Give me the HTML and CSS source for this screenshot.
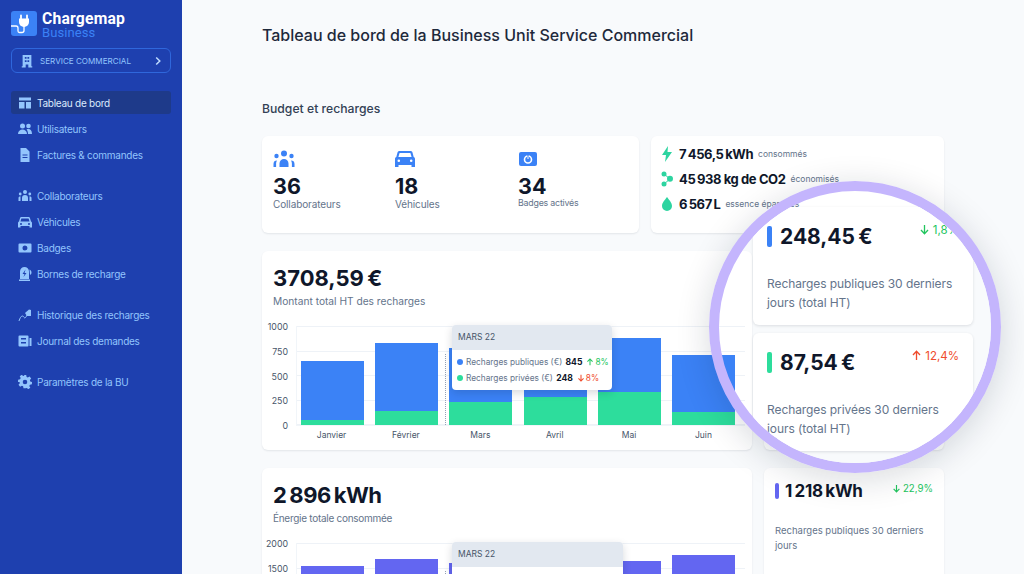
FILE: index.html
```html
<!DOCTYPE html>
<html lang="fr">
<head>
<meta charset="utf-8">
<title>Chargemap Business</title>
<link rel="stylesheet" href="styles.css">
</head>
<body>
<div class="app">
  <aside class="sidebar">
    <div class="logo">
      <div class="logo-mark">
        <svg viewBox="0 0 26 24" width="26" height="24"><path d="M10 4.500v3M16 4.500v3" stroke="#fff" stroke-width="1.800" stroke-linecap="round"/><path d="M8 7.500h10v3.500a5 5 0 0 1-10 0z" fill="#fff"/><path d="M13 15v4.500a2 2 0 0 1-2 2H8.500a1.500 1.500 0 0 1-1.500-1.500v-3a2 2 0 0 0-2-2H0" fill="none" stroke="#fff" stroke-width="1.300"/></svg>
      </div>
      <div class="logo-text"><span class="logo-name">Chargemap</span><span class="logo-sub">Business</span></div>
    </div>
    <button class="unit">
      <svg class="unit-icon" viewBox="0 0 16 16" width="14" height="14"><path fill-rule="evenodd" d="M3 1h10v13h1v1.500H9.500V12h-3v3.500H2V14h1zM5.500 3.500v2h2v-2zm3 0v2h2v-2zm-3 3.500v2h2V7zm3 0v2h2V7z" fill="#93c5fd"/></svg>
      <span class="unit-label">SERVICE COMMERCIAL</span>
      <svg viewBox="0 0 10 10" width="10" height="10"><path d="M3.200 1.500 6.800 5 3.200 8.500" fill="none" stroke="#bfdbfe" stroke-width="1.500"/></svg>
    </button>
    <nav class="nav">
      <div class="nav-group">
        <a class="nav-item active"><svg viewBox="0 0 14 14" width="14" height="14"><path d="M1 1.500h12v3H1zM1 6h5.500v6.500H1zM8 6h5v6.500H8z" fill="#93c5fd"/></svg>Tableau de bord</a>
        <a class="nav-item"><svg viewBox="0 0 14 14" width="14" height="14"><circle cx="4.500" cy="4" r="2.500" fill="#93c5fd"/><circle cx="10.500" cy="4" r="2.300" fill="#93c5fd"/><path d="M0 12c0-6 9-6 9 0zM10 12c0-2-.5-3.500-1.500-4.500 3-1.200 5.500.5 5.500 4.500z" fill="#93c5fd"/></svg>Utilisateurs</a>
        <a class="nav-item"><svg viewBox="0 0 14 14" width="14" height="14"><path fill-rule="evenodd" d="M2.500 0H8l3.500 3.500V14h-9zM4.500 6.500v1h5v-1zm0 2.500v1h5V9z" fill="#93c5fd"/></svg>Factures &amp; commandes</a>
      </div>
      <div class="nav-group">
        <a class="nav-item"><svg viewBox="0 0 14 14" width="14" height="14" fill="#93c5fd"><circle cx="7" cy="3" r="2"/><circle cx="2.200" cy="5" r="1.400"/><circle cx="11.800" cy="5" r="1.400"/><path d="M4 12V9a3 3 0 0 1 6 0v3zM.5 12V9c0-1 .8-1.700 2-1.700V12zM13.500 12V9c0-1-.8-1.700-2-1.700V12z"/></svg>Collaborateurs</a>
        <a class="nav-item"><svg viewBox="0 0 14 14" width="14" height="14"><path fill-rule="evenodd" d="M3.500 2h7c.8 0 1.200.4 1.500 1.200L13 6.500c.6.300 1 .8 1 1.500v4.500h-2.500V11h-9v1.500H0V8c0-.7.4-1.200 1-1.500l1-3.300C2.300 2.400 2.700 2 3.500 2zM3.400 3.500l-.9 3h9l-.9-3zM3 8a1 1 0 1 0 0 2 1 1 0 0 0 0-2zm8 0a1 1 0 1 0 0 2 1 1 0 0 0 0-2z" fill="#93c5fd"/></svg>Véhicules</a>
        <a class="nav-item"><svg viewBox="0 0 14 14" width="14" height="14"><path fill-rule="evenodd" d="M1.500 2.500h11a1 1 0 0 1 1 1v7a1 1 0 0 1-1 1h-11a1 1 0 0 1-1-1v-7a1 1 0 0 1 1-1zM7 4.500a2.500 2.500 0 1 0 0 5 2.500 2.500 0 0 0 0-5z" fill="#93c5fd"/></svg>Badges</a>
        <a class="nav-item"><svg viewBox="0 0 14 14" width="14" height="14"><path fill-rule="evenodd" d="M6.500 0a4.500 4.500 0 0 1 4.500 4.500V12H2V4.500A4.500 4.500 0 0 1 6.500 0zM7.500 2.500 4.500 7h2L5.500 10l3-4h-2z" fill="#93c5fd"/><path d="M1 12.500h11V14H1zM11.500 2.500c1.200.5 2 1.500 2 3s-.8 2-1.500 2.500z" fill="#93c5fd"/></svg>Bornes de recharge</a>
      </div>
      <div class="nav-group">
        <a class="nav-item"><svg viewBox="0 0 14 14" width="14" height="14"><path d="M7 5l4-3.500 2 .5v6H9z" fill="#93c5fd"/><path d="M1 13c1-3 2-5 3.500-5S6 11 7.500 9.500 8 8 9 7" fill="none" stroke="#93c5fd" stroke-width="1"/></svg>Historique des recharges</a>
        <a class="nav-item"><svg viewBox="0 0 14 14" width="14" height="14"><path fill-rule="evenodd" d="M1.500 1.500h8a1 1 0 0 1 1 1v9a1 1 0 0 1-1 1h-8a1 1 0 0 1-1-1v-9a1 1 0 0 1 1-1zM3 4v1.500h5V4zm0 4v1.500h5V8z" fill="#93c5fd"/><path d="M11.500 4H13.500V12H11.500z" fill="#93c5fd"/></svg>Journal des demandes</a>
      </div>
      <div class="nav-group">
        <a class="nav-item"><svg viewBox="0 0 14 14" width="14" height="14"><path fill-rule="evenodd" d="M5.800 0h2.400l.4 2 1.200.6 1.800-1 1.600 2-1.300 1.500.3 1.300L14 7l-.1 2.300-2 .4-.6 1.200 1 1.800-2 1.500-1.500-1.300-1.300.3H5.500l-.4-1.900-1.200-.6-1.800 1-1.600-2 1.300-1.500-.3-1.300L0 7l.1-2.300 2-.4.6-1.200-1-1.800 2-1.500 1.500 1.300 1.300-.3zM7 4.700a2.300 2.300 0 1 0 0 4.600 2.300 2.300 0 0 0 0-4.600z" fill="#93c5fd"/></svg>Paramètres de la BU</a>
      </div>
    </nav>
  </aside>

  <main class="main">
    <h1 class="page-title">Tableau de bord de la Business Unit Service Commercial</h1>
    <h2 class="section-title">Budget et recharges</h2>

    <section class="top-row">
      <div class="card counts">
        <div class="count">
          <svg class="count-icon" viewBox="0 0 22 18" width="22" height="18" fill="#3b82f6"><circle cx="11" cy="3.500" r="3"/><circle cx="3.500" cy="6" r="2.200"/><circle cx="18.500" cy="6" r="2.200"/><path d="M6.500 17v-3.500a4.500 4.500 0 0 1 9 0V17zM.5 17v-3c0-2.500 1.300-3.500 3.500-3.500-.6 1-.9 2-.9 3.200V17zM21.500 17v-3c0-2.500-1.300-3.500-3.500-3.500.6 1 .9 2 .9 3.200V17z"/></svg>
          <div class="count-value">36</div>
          <div class="count-label">Collaborateurs</div>
        </div>
        <div class="count">
          <svg class="count-icon" viewBox="0 0 20 18" width="20" height="18"><path fill-rule="evenodd" d="M4.500 1h11c1 0 1.600.5 2 1.500l1.200 4.500c.8.400 1.300 1 1.300 2v8h-3.500v-2h-13v2H0V9c0-1 .5-1.600 1.300-2l1.200-4.500C2.900 1.500 3.500 1 4.500 1zM4.600 3 3.400 7h13.200l-1.200-4zM3.800 9.500a1.300 1.300 0 1 0 0 2.600 1.300 1.300 0 0 0 0-2.600zm12.400 0a1.300 1.300 0 1 0 0 2.600 1.300 1.300 0 0 0 0-2.600z" fill="#3b82f6"/></svg>
          <div class="count-value">18</div>
          <div class="count-label">Véhicules</div>
        </div>
        <div class="count">
          <svg class="count-icon" viewBox="0 0 20 18" width="20" height="18"><rect x="1" y="2" width="18" height="14" rx="2" fill="#3b82f6"/><circle cx="10" cy="9.500" r="3.500" fill="none" stroke="#fff" stroke-width="1.600"/><path d="M10 5v4" stroke="#3b82f6" stroke-width="2"/><path d="M10 5.500v3.500" stroke="#fff" stroke-width="1"/></svg>
          <div class="count-value">34</div>
          <div class="count-label small">Badges activés</div>
        </div>
      </div>
      <div class="card totals">
        <div class="total">
          <svg viewBox="0 0 12 16" width="12" height="16"><path d="M7 0 1 9h4l-1 7 7-10H6.500z" fill="#2dd4a0"/></svg>
          <strong>7&#8239;456,5&#8239;kWh</strong><span>consommés</span>
        </div>
        <div class="total">
          <svg viewBox="0 0 12 16" width="12" height="16" fill="#2dd4a0"><circle cx="3" cy="3" r="2.500"/><circle cx="9" cy="7.800" r="3"/><circle cx="3" cy="13" r="2.500"/><path d="M3 3l6 5-6 5" stroke="#2dd4a0" fill="none"/></svg>
          <strong>45&#8239;938 kg de CO2</strong><span>économisés</span>
        </div>
        <div class="total">
          <svg viewBox="0 0 12 16" width="12" height="16"><path d="M6 1c2 3 5 5.500 5 9a5 5 0 0 1-10 0c0-3.500 3-6 5-9z" fill="#2dd4a0"/></svg>
          <strong>6&#8239;567&#8239;L</strong><span>essence épargnés</span>
        </div>
      </div>
    </section>

    <section class="chart-row">
      <div class="card chart-card">
        <div class="big-value">3708,59&#8239;€</div>
        <div class="big-label">Montant total HT des recharges</div>
        <div class="chart">
          <div class="y-axis"><span>1000</span><span>750</span><span>500</span><span>250</span><span>0</span></div>
          <div class="plot">
            <div class="grid-lines"><i></i><i></i><i></i><i></i><i></i></div>
            <div class="bars">
              <div class="bar bar-blue" style="height:65%"><b class="seg-green" style="height:8%"></b></div>
              <div class="bar bar-blue" style="height:83%"><b class="seg-green" style="height:17%"></b></div>
              <div class="bar bar-blue" style="height:78%"><b class="seg-green" style="height:30%"></b></div>
              <div class="bar bar-blue" style="height:70%"><b class="seg-green" style="height:41%"></b></div>
              <div class="bar bar-blue" style="height:88%"><b class="seg-green" style="height:38%"></b></div>
              <div class="bar bar-blue" style="height:71%"><b class="seg-green" style="height:18%"></b></div>
            </div>
            <div class="cursor"></div>
            <div class="tooltip">
              <div class="tooltip-head">MARS 22</div>
              <div class="tooltip-row"><i class="dot dot-blue"></i>Recharges publiques (€) <strong>845</strong>
                <span class="up"><svg viewBox="0 0 10 10" width="8" height="8"><path d="M5 9V1.500M1.800 4.500 5 1.200l3.200 3.300" fill="none" stroke="currentColor" stroke-width="1.300"/></svg>8%</span></div>
              <div class="tooltip-row"><i class="dot dot-green"></i>Recharges privées (€) <strong>248</strong>
                <span class="down"><svg viewBox="0 0 10 10" width="8" height="8"><path d="M5 1v7.500M1.800 5.500 5 8.800l3.200-3.300" fill="none" stroke="currentColor" stroke-width="1.300"/></svg>8%</span></div>
            </div>
          </div>
          <div class="x-axis"><span>Janvier</span><span>Février</span><span>Mars</span><span>Avril</span><span>Mai</span><span>Juin</span></div>
        </div>
      </div>
      <div class="side-col">
        <div class="card side-card">
          <div class="side-top"><i class="mark mark-blue"></i><strong>248,45&#8239;€</strong><span class="up"><svg viewBox="0 0 10 10" width="9" height="9"><path d="M5 1v7.500M1.800 5.500 5 8.800l3.200-3.300" fill="none" stroke="currentColor" stroke-width="1.300"/></svg>1,8%</span></div>
          <p>Recharges publiques 30 derniers jours (total HT)</p>
        </div>
        <div class="card side-card">
          <div class="side-top"><i class="mark mark-green"></i><strong>87,54&#8239;€</strong><span class="down"><svg viewBox="0 0 10 10" width="9" height="9"><path d="M5 9V1.500M1.800 4.500 5 1.200l3.200 3.300" fill="none" stroke="currentColor" stroke-width="1.300"/></svg>12,4%</span></div>
          <p>Recharges privées 30 derniers jours (total HT)</p>
        </div>
      </div>
    </section>

    <section class="chart-row">
      <div class="card chart-card">
        <div class="big-value">2&#8201;896&#8239;kWh</div>
        <div class="big-label tight">Énergie totale consommée</div>
        <div class="chart">
          <div class="y-axis"><span>2000</span><span>1500</span><span>1000</span><span>500</span><span>0</span></div>
          <div class="plot">
            <div class="grid-lines"><i></i><i></i><i></i><i></i><i></i></div>
            <div class="bars">
              <div class="bar bar-indigo" style="height:77%"></div>
              <div class="bar bar-indigo" style="height:84%"></div>
              <div class="bar bar-indigo" style="height:80%"></div>
              <div class="bar bar-indigo" style="height:80%"></div>
              <div class="bar bar-indigo" style="height:82%"></div>
              <div class="bar bar-indigo" style="height:88%"></div>
            </div>
            <div class="cursor"></div>
            <div class="tooltip wide">
              <div class="tooltip-head">MARS 22</div>
            </div>
          </div>
        </div>
      </div>
      <div class="side-col">
        <div class="card side-card">
          <div class="side-top wide-value"><i class="mark mark-indigo"></i><strong>1&#8201;218&#8239;kWh</strong><span class="up"><svg viewBox="0 0 10 10" width="9" height="9"><path d="M5 1v7.500M1.800 5.500 5 8.800l3.200-3.300" fill="none" stroke="currentColor" stroke-width="1.300"/></svg>22,9%</span></div>
          <p>Recharges publiques 30 derniers jours</p>
        </div>
      </div>
    </section>
  </main>

  <div class="lens">
    <div class="lens-panel">
      <div class="card lens-card">
        <div class="lens-top"><i class="lens-mark mark-blue"></i><strong>248,45&#8239;€</strong><span class="up"><svg viewBox="0 0 10 10" width="11" height="11"><path d="M5 1v7.500M1.800 5.500 5 8.800l3.200-3.300" fill="none" stroke="currentColor" stroke-width="1.200"/></svg>1,8%</span></div>
        <p>Recharges publiques 30 derniers jours (total HT)</p>
      </div>
      <div class="card lens-card">
        <div class="lens-top"><i class="lens-mark mark-green"></i><strong>87,54&#8239;€</strong><span class="down"><svg viewBox="0 0 10 10" width="11" height="11"><path d="M5 9V1.500M1.800 4.500 5 1.200l3.200 3.300" fill="none" stroke="currentColor" stroke-width="1.200"/></svg>12,4%</span></div>
        <p>Recharges privées 30 derniers jours (total HT)</p>
      </div>
    </div>
  </div>
</div>
</body>
</html>
```

FILE: styles.css
```css
* { box-sizing: border-box; }
html, body { margin: 0; height: 574px; overflow: hidden; }
body { font-family: Inter, "Liberation Sans", sans-serif; color: #0f172a; background: #f8fafc; }
svg { display: block; flex: none; }
.app { display: flex; height: 574px; overflow: hidden; position: relative; }

.sidebar { width: 182px; flex: none; background: #1e40af; padding: 11px 11px 0 11px; display: flex; flex-direction: column; }
.logo { display: flex; gap: 5px; height: 26px; }
.logo-mark { width: 26px; height: 25px; border-radius: 3px; background: #3b82f6; overflow: hidden; }
.logo-text { display: flex; flex-direction: column; }
.logo-name { font: 700 15.700px/15px Roboto, sans-serif; color: #fff; letter-spacing: .2px; }
.logo-sub { font: 400 13px/13px Roboto, sans-serif; color: #3b82f6; letter-spacing: .1px; }
.unit { margin-top: 11px; width: 160px; height: 25px; border: 1px solid #2f67dc; border-radius: 6px; background: transparent; display: flex; align-items: center; padding: 0 7px 0 8px; font-family: inherit; }
.unit-icon { margin-right: 6px; }
.unit-label { flex: 1; text-align: left; font-size: 8.100px; color: #93c5fd; }
.nav { margin-top: 18px; display: flex; flex-direction: column; gap: 17.900px; }
.nav-group { display: flex; flex-direction: column; gap: 3.200px; }
.nav-item { height: 23px; display: flex; align-items: center; gap: 5px; padding-left: 7px; font-size: 10px; letter-spacing: -.26px; color: #93c5fd; border-radius: 3px; width: 160px; }
.nav-item.active { background: #1e3a8a; color: #dbeafe; }

.main { flex: 1; padding: 24px 80px 0; min-width: 0; }
.page-title { margin: 0; font-size: 16px; line-height: 22px; font-weight: 500; color: #1e293b; }
.section-title { margin: 55px 0 19px; font-size: 12.200px; line-height: 16px; font-weight: 500; color: #334155; }
.card { background: #fff; border-radius: 6px; box-shadow: 0 1px 2px rgba(15,23,42,.09); }
.top-row { display: grid; grid-template-columns: 377px 293px; gap: 12px; height: 97px; }
.counts { display: grid; grid-template-columns: repeat(3, 122px); padding: 14px 11px 0; }
.count-icon { margin-bottom: 6px; }
.count-value { font-size: 21.500px; line-height: 24px; font-weight: 700; color: #0f172a; margin-top: 1px; }
.count-label { font-size: 10px; letter-spacing: -.12px; line-height: 13px; color: #64748b; }
.count-label.small { font-size: 8.800px; letter-spacing: -.2px; margin-top: -2px; }
.count:last-child { padding-left: 1px; }
.totals { display: flex; flex-direction: column; gap: 7px; padding: 9px 10px; }
.total { display: flex; align-items: center; height: 18px; }
.total svg { margin-right: 6px; }
.total strong { font-size: 13px; font-weight: 700; letter-spacing: -.4px; }
.total span { font-size: 8.500px; color: #64748b; margin-left: 5px; white-space: nowrap; }

.chart-row { display: grid; grid-template-columns: 490px 180px; gap: 12px; margin-top: 18px; height: 199px; }
.chart-card { padding: 14px 7px 0 11px; }
.big-value { font-size: 22px; line-height: 26px; font-weight: 700; color: #0f172a; letter-spacing: -.5px; }
.big-label { font-size: 10.200px; line-height: 14px; color: #64748b; margin-top: 3px; }
.big-label.tight { font-size: 10px; letter-spacing: -.28px; }
.chart { display: grid; grid-template-columns: 20px 449px; column-gap: 8px; grid-template-rows: 100px 20px; margin: 18px 0 0 -5px; }
.y-axis { display: flex; flex-direction: column; justify-content: space-between; align-items: flex-end; margin: -5px 0 -5px; font-size: 8.800px; line-height: 11px; color: #475569; }
.plot { position: relative; display: grid; border-left: 1px solid #f1f5f9; border-bottom: 1px solid #f1f5f9; }
.grid-lines, .bars { grid-area: 1 / 1; }
.grid-lines { display: flex; flex-direction: column; justify-content: space-between; }
.grid-lines i { display: block; height: 1px; background: #eef2f7; }
.bars { display: grid; grid-template-columns: repeat(6, 1fr); column-gap: 11.300px; align-items: end; padding: 0 10px 0 4px; height: 99px; }
.bar { display: flex; flex-direction: column; justify-content: flex-end; }
.bar-blue { background: #3b82f6; }
.bar-indigo { background: #6366f1; }
.seg-green { display: block; background: #2ddd9c; }
.x-axis { grid-column: 2; display: grid; grid-template-columns: repeat(6, 1fr); column-gap: 11.300px; padding: 3px 10px 0 4px; font-size: 8.500px; line-height: 12px; color: #475569; text-align: center; }
.cursor { position: absolute; left: 148px; top: 28px; height: 71px; border-left: 1px dotted #94a3b8; }
.tooltip { position: absolute; left: 155px; top: -1px; width: 160px; height: 65px; background: #fff; border-radius: 4px; box-shadow: 0 3px 8px rgba(15,23,42,.16); overflow: hidden; }
.tooltip.wide { width: 171px; height: 120px; }
.tooltip-head { height: 25px; background: #e2e8f0; padding-left: 6px; font-size: 8.500px; line-height: 25px; color: #475569; }
.tooltip-row { display: flex; align-items: center; height: 16px; padding-left: 5px; font-size: 8.300px; color: #64748b; white-space: pre; }
.tooltip-row:nth-child(2) { margin-top: 4px; }
.tooltip-row strong { color: #0f172a; font-weight: 700; margin-left: 1px; font-size: 8.600px; }
.dot { width: 6px; height: 6px; flex: none; border-radius: 50%; margin-right: 3px; }
.dot-blue { background: #3b82f6; }
.dot-green { background: #2ddd9c; }
.up { color: #22c55e; }
.down { color: #ef4b2c; }
.tooltip-row span { display: inline-flex; align-items: center; gap: 1px; margin-left: 4px; }

.side-col { display: flex; flex-direction: column; gap: 12px; }
.side-card { flex: 1; padding: 14px 11px 0; height: 96px; flex-shrink: 0; }
.side-top { display: flex; align-items: center; height: 17px; }
.mark { width: 4px; height: 16px; border-radius: 2px; margin-right: 6px; }
.mark-blue { background: #3b82f6; }
.mark-green { background: #2ddd9c; }
.mark-indigo { background: #6366f1; }
.side-top strong { font-size: 15.500px; font-weight: 700; letter-spacing: -.2px; }
.wide-value strong { font-size: 17px; letter-spacing: -.25px; }
.side-top span { margin-left: auto; display: inline-flex; align-items: center; font-size: 9.700px; margin-top: -5px; gap: 2px; }
.side-card p { margin: 24px 0 0; font-size: 9.500px; line-height: 15px; color: #64748b; }

.lens { position: absolute; left: 709px; top: 181px; width: 292px; height: 292px; border: 10px solid #c4b5fd; border-radius: 50%; overflow: hidden; box-shadow: 0 6px 34px rgba(15,23,42,.16); }
.lens-panel { margin: 16px 0 0 34px; height: 300px; background: #f8fafc; display: flex; flex-direction: column; gap: 8px; }
.lens-card { width: 220px; height: 118px; flex: none; padding: 18px 14px 0; box-shadow: 0 1px 3px rgba(15,23,42,.12); }
.lens-top { display: flex; align-items: center; height: 22px; }
.lens-mark { width: 5px; height: 21px; border-radius: 2px; margin-right: 8px; }
.lens-top strong { font-size: 21px; font-weight: 700; letter-spacing: -.85px; }
.lens-top span { margin-left: auto; display: inline-flex; gap: 3px; align-items: center; font-size: 11.500px; margin-top: -13px; }
.lens-card p { margin: 27px -10px 0 0; font-size: 12px; letter-spacing: -.08px; line-height: 19px; color: #64748b; max-width: 186px; }
```
